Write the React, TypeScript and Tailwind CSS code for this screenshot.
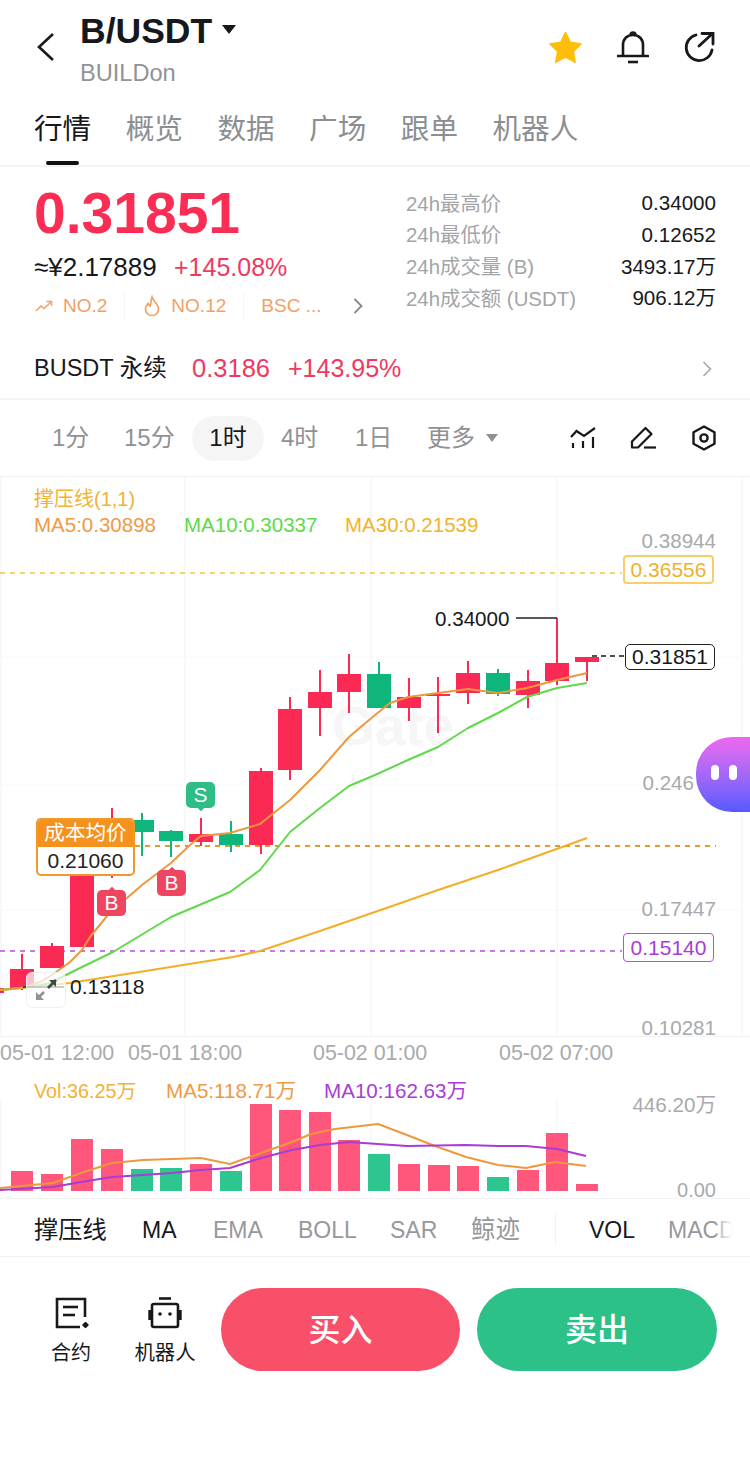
import { ReactNode } from "react";

type Candle = { x: number; top: number; bottom: number; high: number; low: number; up: boolean };

const candles: Candle[] = [
  { x: -8, top: 988, bottom: 993, high: 988, low: 993, up: true },
  { x: 22, top: 969, bottom: 988, high: 954, low: 990, up: true },
  { x: 52, top: 946, bottom: 968, high: 943, low: 968, up: true },
  { x: 82, top: 870, bottom: 947, high: 870, low: 947, up: true },
  { x: 112, top: 825, bottom: 870, high: 808, low: 878, up: true },
  { x: 142, top: 820, bottom: 832, high: 813, low: 856, up: false },
  { x: 171, top: 831, bottom: 841, high: 830, low: 857, up: false },
  { x: 201, top: 834, bottom: 842, high: 818, low: 846, up: true },
  { x: 231, top: 834, bottom: 845, high: 821, low: 852, up: false },
  { x: 261, top: 771, bottom: 845, high: 768, low: 854, up: true },
  { x: 290, top: 709, bottom: 770, high: 697, low: 780, up: true },
  { x: 320, top: 692, bottom: 708, high: 670, low: 736, up: true },
  { x: 349, top: 674, bottom: 692, high: 654, low: 713, up: true },
  { x: 379, top: 674, bottom: 708, high: 662, low: 708, up: false },
  { x: 409, top: 697, bottom: 708, high: 678, low: 721, up: true },
  { x: 438, top: 694, bottom: 696, high: 677, low: 733, up: true },
  { x: 468, top: 673, bottom: 693, high: 661, low: 704, up: true },
  { x: 498, top: 673, bottom: 694, high: 669, low: 696, up: false },
  { x: 528, top: 681, bottom: 695, high: 670, low: 708, up: true },
  { x: 557, top: 663, bottom: 681, high: 618, low: 685, up: true },
  { x: 587, top: 657, bottom: 662, high: 657, low: 681, up: true },
];

const ma5 =
  "0,990 22,988 40,982 52,975 70,962 82,950 90,937 112,910 127,898 142,885 171,863 190,845 201,836 230,833 260,824 290,800 320,770 349,737 375,715 390,703 408,697 438,693 468,689 498,693 527,688 557,680 587,673";
const ma10 =
  "0,990 30,987 50,983 80,968 113,952 171,917 230,892 260,870 290,832 320,808 349,786 375,775 408,760 438,747 468,728 498,713 527,697 557,688 587,683";
const ma30 =
  "0,990 70,983 133,973 233,957 260,951 317,932 375,912 438,890 498,870 565,846 587,838";

const vols: [number, number, boolean][] = [
  [22, 1171, true], [52, 1174, true], [82, 1139, true], [112, 1149, true], [142, 1169, false],
  [171, 1168, false], [201, 1164, true], [231, 1171, false], [261, 1104, true], [290, 1110, true],
  [320, 1112, true], [349, 1140, true], [379, 1154, false], [409, 1164, true], [439, 1165, true],
  [468, 1166, true], [498, 1177, false], [528, 1170, true], [557, 1133, true], [587, 1184, true],
];

const volMa5 =
  "0,1188 53,1183 81,1173 112,1163 143,1160 172,1159 201,1158 230,1164 261,1153 292,1142 311,1134 335,1129 378,1124 407,1135 435,1146 466,1157 498,1165 526,1168 555,1162 586,1166";
const volMa10 =
  "0,1190 53,1187 81,1182 112,1177 143,1175 172,1173 201,1170 230,1168 261,1158 292,1150 320,1145 349,1142 378,1144 407,1146 466,1145 498,1146 526,1146 557,1149 586,1156";

function Tab({ children, active }: { children: ReactNode; active?: boolean }) {
  return (
    <div className={`relative text-[28.6px] leading-none ${active ? "text-[#16181b]" : "text-[#8b8e92]"}`}>
      {children}
      {active && <div className="absolute left-[12px] top-[46px] h-[4px] w-[33px] rounded-full bg-[#111]" />}
    </div>
  );
}

function Stat({ label, value }: { label: string; value: string }) {
  return (
    <div className="flex h-[31.7px] items-center justify-between">
      <span className="text-[20.4px] text-[#a3a5a8]">{label}</span>
      <span className="text-[20.6px] text-[#17191c]">{value}</span>
    </div>
  );
}

function Marker({ letter, className, down }: { letter: string; className: string; down?: boolean }) {
  return (
    <div className={`absolute flex h-[26px] w-[29px] items-center justify-center rounded-[5px] text-[21px] text-white ${className}`}>
      {letter}
      <div
        className={`absolute left-[12px] h-[6px] w-[6px] rotate-45 ${down ? "bottom-[-2px]" : "top-[-2px]"} ${
          letter === "S" ? "bg-[#2dbd85]" : "bg-[#ee4560]"
        }`}
      />
    </div>
  );
}

export default function App() {
  return (
    <div className="h-[1476px] w-[750px] overflow-hidden bg-white font-['Liberation_Sans','Noto_Sans_CJK_SC',sans-serif] text-[#16181b]">
      {/* header */}
      <div className="flex h-[100px] items-start pl-[36px] pr-[34px]">
        <svg width="18" height="28" viewBox="0 0 18 28" className="mt-[33px]" fill="none" stroke="#1a1a1a" strokeWidth="2.6">
          <path d="M17 1 L3 14 L17 27" />
        </svg>
        <div className="ml-[26px] flex flex-col">
          <div className="mt-[11px] flex items-center">
            <span className="text-[35.5px] font-bold leading-[40px]">B/USDT</span>
            <span className="ml-[10px] mt-[-4px] h-0 w-0 border-x-[7px] border-t-[9px] border-x-transparent border-t-[#16181b]" />
          </div>
          <span className="mt-[10px] text-[23.6px] leading-[24px] text-[#919396]">BUILDon</span>
        </div>
        <div className="ml-auto mt-[30px] flex items-center">
          <svg width="35" height="33" viewBox="0 0 38 36">
            <path
              d="M19 1.5 L24.3 12.3 L36.2 14 L27.6 22.3 L29.7 34.2 L19 28.6 L8.3 34.2 L10.4 22.3 L1.8 14 L13.7 12.3 Z"
              fill="#ffbe0a"
              stroke="#ffbe0a"
              strokeWidth="1.5"
              strokeLinejoin="round"
            />
          </svg>
          <svg width="32" height="34" viewBox="0 0 32 34" className="ml-[34px]" fill="none" stroke="#16181b" strokeWidth="2.6">
            <path d="M1 26 H31" strokeLinecap="round" />
            <path d="M6 26 V15 C6 9 10 5 16 5 C22 5 26 9 26 15 V26" />
            <path d="M13.5 4.5 C14 1.8 18 1.8 18.5 4.5" />
            <path d="M11 32 H21" />
          </svg>
          <svg width="34" height="32" viewBox="0 0 34 32" className="ml-[33px]" fill="none" stroke="#16181b" strokeWidth="2.8" strokeLinecap="round">
            <path d="M14 4 A13 13 0 1 0 30 19" />
            <path d="M17 15 L30 3" />
            <path d="M20 2.5 H31 V13" />
          </svg>
        </div>
      </div>

      {/* tabs */}
      <div className="flex h-[67px] gap-[34.5px] border-b-2 border-[#f3f3f3] pl-[34px] pt-[15px]">
        <Tab active>行情</Tab>
        <Tab>概览</Tab>
        <Tab>数据</Tab>
        <Tab>广场</Tab>
        <Tab>跟单</Tab>
        <Tab>机器人</Tab>
      </div>

      {/* price block */}
      <div className="flex h-[167px] pl-[34px] pr-[34px]">
        <div className="w-[372px]">
          <div className="mt-[14px] text-[57px] font-bold leading-[64px] text-[#fa2d55]">0.31851</div>
          <div className="mt-[9px] flex items-center leading-[26px]">
            <span className="w-[140px] text-[26px]">≈¥2.17889</span>
            <span className="text-[25px] text-[#ee3a61]">+145.08%</span>
          </div>
          <div className="mt-[13px] flex h-[26px] items-center text-[19px] text-[#f2a163]">
            <svg width="18" height="12" viewBox="0 0 18 12" fill="none" stroke="#f2a163" strokeWidth="1.6" className="ml-[1px]">
              <path d="M1 11 L6 6 L9 8.5 L16 2" />
              <path d="M11.5 1.5 H16.5 V6" />
            </svg>
            <span className="ml-[10px]">NO.2</span>
            <div className="ml-[17px] h-[26px] w-px bg-[#f6f6f6]" />
            <svg width="18" height="22" viewBox="0 0 18 22" fill="none" stroke="#f2a163" strokeWidth="1.7" className="ml-[18px]">
              <path d="M9 2 C10 6 15.5 9 15.5 14 C15.5 18 12.5 20.5 9 20.5 C5.5 20.5 2.5 18 2.5 14 C2.5 11.5 4 10 5 8.5 C6 10 6.5 10.5 7.2 11 C8 8 8 5 9 2 Z" />
            </svg>
            <span className="ml-[10px]">NO.12</span>
            <div className="ml-[17px] h-[26px] w-px bg-[#f6f6f6]" />
            <span className="ml-[17px]">BSC ...</span>
            <svg width="10" height="16" viewBox="0 0 10 16" fill="none" stroke="#83868a" strokeWidth="1.8" className="ml-[32px]">
              <path d="M1.5 1 L8.5 8 L1.5 15" />
            </svg>
          </div>
        </div>
        <div className="mt-[21px] flex-1">
          <Stat label="24h最高价" value="0.34000" />
          <Stat label="24h最低价" value="0.12652" />
          <Stat label="24h成交量 (B)" value="3493.17万" />
          <Stat label="24h成交额 (USDT)" value="906.12万" />
        </div>
      </div>

      {/* perpetual row */}
      <div className="flex h-[66px] items-center border-b-2 border-[#f3f3f3] pl-[34px] pr-[38px] pt-[5px] text-[23.5px]">
        <span className="w-[158px]">BUSDT 永续</span>
        <span className="w-[96px] text-[25.5px] text-[#ee3a61]">0.3186</span>
        <span className="text-[25px] text-[#ee3a61]">+143.95%</span>
        <svg width="10" height="16" viewBox="0 0 10 16" fill="none" stroke="#a5a7aa" strokeWidth="1.6" className="ml-auto">
          <path d="M1.5 1 L8.5 8 L1.5 15" />
        </svg>
      </div>

      {/* intervals */}
      <div className="flex h-[77px] items-center border-b border-[#f3f3f3] pl-[52px] pr-[33px] text-[24px] text-[#8f9195]">
        <span className="w-[72px]">1分</span>
        <span className="w-[68px]">15分</span>
        <span className="flex h-[45px] w-[72px] items-center justify-center rounded-full bg-[#f5f5f5] text-[#16181b]">1时</span>
        <span className="ml-[17px] w-[74px]">4时</span>
        <span className="w-[72px]">1日</span>
        <span>更多</span>
        <span className="ml-[11px] h-0 w-0 border-x-[6px] border-t-[8px] border-x-transparent border-t-[#8f9195]" />
        <svg width="26" height="22" viewBox="0 0 26 22" fill="none" stroke="#16181b" strokeWidth="2.2" className="ml-auto">
          <path d="M1 10 L6.5 4 L14 9 L25 1" />
          <path d="M3 16 V21" />
          <path d="M13 14 V21" />
          <path d="M23 10 V21" />
        </svg>
        <svg width="26" height="24" viewBox="0 0 26 24" fill="none" stroke="#16181b" strokeWidth="2.2" className="ml-[34px]">
          <path d="M2 21.5 V15.5 L15.5 2 L21.5 8 L8 21.5 Z" strokeLinejoin="round" />
          <path d="M14 21.5 H26" />
        </svg>
        <svg width="26" height="26" viewBox="0 0 26 26" fill="none" stroke="#16181b" strokeWidth="2.4" className="ml-[35px]">
          <path d="M13 1.5 L23.5 7.2 V18.8 L13 24.5 L2.5 18.8 V7.2 Z" strokeLinejoin="round" />
          <circle cx="13" cy="13" r="3.6" />
        </svg>
      </div>

      {/* main chart */}
      <div className="relative h-[560px] border-b border-[#f3f3f3]">
        <div className="absolute left-[332px] top-[222px] text-[55px] font-bold leading-none text-[#f6f6f7]">Gate</div>
        <svg width={750} height={560} viewBox="0 477 750 560" className="absolute left-0 top-0" fill="none">
          {[1, 185, 371, 557, 742].map((x) => (
            <line key={x} x1={x} x2={x} y1={477} y2={1037} stroke="#f3f3f3" strokeWidth="1" />
          ))}
          {[657, 785, 910].map((y) => (
            <line key={y} x1={0} x2={742} y1={y} y2={y} stroke="#f8f8f8" strokeWidth="1" />
          ))}
          <line x1={0} x2={622} y1={573} y2={573} stroke="#f5c440" strokeWidth="1.6" strokeDasharray="5 5" />
          <line x1={135} x2={716} y1={846} y2={846} stroke="#e59a24" strokeWidth="2" strokeDasharray="5 5" />
          <line x1={0} x2={622} y1={951} y2={951} stroke="#b64fdb" strokeWidth="1.4" strokeDasharray="5 5" />
          <line x1={592} x2={625} y1={656} y2={656} stroke="#16181b" strokeWidth="1.4" strokeDasharray="5 4" />
          {candles.map((c) => {
            const color = c.up ? "#fb2a55" : "#0fb67c";
            return (
              <g key={c.x}>
                <line x1={c.x} x2={c.x} y1={c.high} y2={c.low} stroke={color} strokeWidth="2" />
                <rect x={c.x - 12} y={c.top} width={24} height={c.bottom - c.top} fill={color} />
              </g>
            );
          })}
          <polyline points={ma30} stroke="#f3ae25" strokeWidth="2" strokeLinejoin="round" />
          <polyline points={ma10} stroke="#5fd94a" strokeWidth="2" strokeLinejoin="round" />
          <polyline points={ma5} stroke="#ee983e" strokeWidth="2" strokeLinejoin="round" />
          <polyline points="516,618 557,618" stroke="#222" strokeWidth="1.5" />
          <line x1={23} x2={64} y1={987} y2={987} stroke="#222" strokeWidth="1.5" />
        </svg>

        <div className="absolute left-[34px] top-[11px] text-[20px] leading-[22px] text-[#f3b233]">撑压线(1,1)</div>
        <div className="absolute left-[34px] top-[37px] text-[20.5px] leading-[22px] text-[#ef9a45]">MA5:0.30898</div>
        <div className="absolute left-[184px] top-[37px] text-[20.5px] leading-[22px] text-[#5fd94a]">MA10:0.30337</div>
        <div className="absolute left-[345px] top-[37px] text-[20.5px] leading-[22px] text-[#f0b429]">MA30:0.21539</div>

        <div className="absolute right-[34px] top-[53px] text-[20.6px] leading-[22px] text-[#a8aaad]">0.38944</div>
        <div className="absolute right-[56px] top-[295px] text-[20.6px] leading-[22px] text-[#a8aaad]">0.246</div>
        <div className="absolute right-[34px] top-[421px] text-[20.6px] leading-[22px] text-[#a8aaad]">0.17447</div>
        <div className="absolute right-[34px] top-[540px] text-[20.6px] leading-[22px] text-[#a8aaad]">0.10281</div>

        <div className="absolute left-[623px] top-[78px] flex h-[29px] w-[91px] items-center justify-center rounded-[4px] border-2 border-[#f5cf6a] bg-white text-[21px] text-[#eeb22a]">0.36556</div>
        <div className="absolute left-[625px] top-[167px] flex h-[26px] w-[90px] items-center justify-center rounded-[5px] border border-[#222] bg-white text-[21px] text-[#16181b]">0.31851</div>
        <div className="absolute left-[623px] top-[456px] flex h-[29px] w-[91px] items-center justify-center rounded-[4px] border border-[#b64fdb] bg-white text-[21px] text-[#a93cd6]">0.15140</div>

        <div className="absolute left-[435px] top-[131px] text-[20.6px] leading-[22px]">0.34000</div>
        <div className="absolute left-[70px] top-[499px] text-[21px] leading-[22px]">0.13118</div>

        {/* cost label */}
        <div className="absolute left-[36px] top-[341px] h-[58px] w-[99px] overflow-hidden rounded-[5px] border-2 border-[#f0982a] bg-white">
          <div className="flex h-[27px] items-center justify-center bg-[#f5921e] text-[20.6px] text-white">成本均价</div>
          <div className="flex h-[27px] items-center justify-center text-[21px] text-[#222]">0.21060</div>
        </div>

        <Marker letter="B" className="left-[97px] top-[413px] bg-[#ee4560]" />
        <Marker letter="B" className="left-[157px] top-[393px] bg-[#ee4560]" />
        <Marker letter="S" className="left-[186px] top-[305px] bg-[#2dbd85]" down />

        {/* collapse button */}
        <div className="absolute left-[26px] top-[495px] flex h-[36px] w-[40px] items-center justify-center rounded-[6px] border border-[#efefef] bg-white/70">
          <svg width="24" height="24" viewBox="0 0 24 24" fill="none" stroke="#6d7275" strokeWidth="2.6">
            <path d="M14 10 L22 2" stroke="#3f4a47" />
            <path d="M15 2 L22 2 L22 9 Z" stroke="none" fill="#3f4a47" />
            <path d="M10 14 L3 21" stroke="#8f9396" />
            <path d="M2 14 L2 22 L10 22 Z" stroke="none" fill="#8f9396" />
          </svg>
        </div>

        {/* floating mascot */}
        <div className="absolute left-[696px] top-[260px] flex h-[75px] w-[54px] items-center gap-[10px] rounded-l-[36px] bg-gradient-to-b from-[#ee68ee] to-[#5559ff] pl-[15px] pb-[4px]">
          <div className="h-[15px] w-[8px] rounded-full bg-white" />
          <div className="h-[15px] w-[8px] rounded-full bg-white" />
        </div>
      </div>

      {/* x axis */}
      <div className="relative h-[62px] text-[21.4px] leading-[24px] text-[#a8aaad]">
        <span className="absolute left-0 top-[4px]">05-01 12:00</span>
        <span className="absolute left-[128px] top-[4px]">05-01 18:00</span>
        <span className="absolute left-[313px] top-[4px]">05-02 01:00</span>
        <span className="absolute left-[499px] top-[4px]">05-02 07:00</span>
        <div className="absolute left-[34px] top-[43px] text-[19.8px] leading-[22px] text-[#f3b233]">Vol:36.25万</div>
        <div className="absolute left-[166px] top-[43px] text-[20.6px] leading-[22px] text-[#ef9a45]">MA5:118.71万</div>
        <div className="absolute left-[324px] top-[43px] text-[20.6px] leading-[22px] text-[#a93cd6]">MA10:162.63万</div>
      </div>

      {/* volume chart */}
      <div className="relative h-[100px] border-b border-[#f3f3f3]">
        <svg width={750} height={100} viewBox="0 1099 750 100" className="absolute left-0 top-0" fill="none">
          {[1, 185, 371, 557].map((x) => (
            <line key={x} x1={x} x2={x} y1={1099} y2={1199} stroke="#f3f3f3" strokeWidth="1" />
          ))}
          {vols.map(([x, top, up]) => (
            <rect key={x} x={x - 11} y={top} width={22} height={1191 - top} fill={up ? "#ff567b" : "#2ec68f"} />
          ))}
          <polyline points={volMa5} stroke="#ee983e" strokeWidth="2" strokeLinejoin="round" />
          <polyline points={volMa10} stroke="#a93cd6" strokeWidth="2" strokeLinejoin="round" />
        </svg>
        <div className="absolute right-[34px] top-[-5px] text-[20.6px] leading-[22px] text-[#a8aaad]">446.20万</div>
        <div className="absolute right-[34px] top-[80px] text-[20px] leading-[22px] text-[#a8aaad]">0.00</div>
      </div>

      {/* indicators */}
      <div className="relative flex h-[58px] items-center overflow-hidden border-b border-[#f3f3f3] pl-[34px] pt-[5px] text-[23px] text-[#96989c]">
        <span className="w-[108px] text-[24.3px] text-[#16181b]">撑压线</span>
        <span className="w-[71px] text-[#16181b]">MA</span>
        <span className="w-[85px]">EMA</span>
        <span className="w-[92px]">BOLL</span>
        <span className="w-[81px]">SAR</span>
        <span className="w-[84px] text-[24.5px]">鲸迹</span>
        <div className="h-[32px] w-px bg-[#f2f2f2]" />
        <span className="ml-[33px] w-[79px] shrink-0 text-[#16181b]">VOL</span>
        <span className="shrink-0">MACD</span>
        <div className="absolute right-0 top-0 h-full w-[34px] bg-gradient-to-r from-white/20 to-white to-50%" />
      </div>

      {/* actions */}
      <div className="flex pl-[52px] pt-[31px]">
        <div className="mt-[9px] flex w-[38px] flex-col items-center">
          <svg width="36" height="32" viewBox="0 0 36 32" fill="none" stroke="#16181b" strokeWidth="2.6">
            <path d="M32 20 V2 H4 V30 H27" />
            <path d="M10 10 H25" />
            <path d="M10 18 H22" />
            <rect x="30" y="25.5" width="5" height="5" rx="1" fill="#16181b" stroke="none" transform="rotate(45 32.5 28)" />
          </svg>
          <span className="mt-[12px] whitespace-nowrap text-[20px] leading-[24px]">合约</span>
        </div>
        <div className="ml-[56px] mt-[9px] flex w-[38px] flex-col items-center">
          <svg width="36" height="32" viewBox="0 0 36 32" fill="none" stroke="#16181b" strokeWidth="2.6">
            <path d="M12 1.5 H24" />
            <rect x="5" y="7" width="26" height="23" rx="2" />
            <path d="M3 13 V23 M33 13 V23" strokeWidth="3.4" />
            <circle cx="13" cy="17" r="1.8" fill="#16181b" stroke="none" />
            <circle cx="23" cy="17" r="1.8" fill="#16181b" stroke="none" />
          </svg>
          <span className="mt-[12px] whitespace-nowrap text-[20.4px] leading-[24px]">机器人</span>
        </div>
        <div className="ml-[37px] flex h-[83px] w-[239px] items-center justify-center rounded-full bg-[#f85068] text-[32px] font-medium text-white">买入</div>
        <div className="ml-[17px] flex h-[83px] w-[240px] items-center justify-center rounded-full bg-[#2cc188] text-[32px] font-medium text-white">卖出</div>
      </div>
    </div>
  );
}
